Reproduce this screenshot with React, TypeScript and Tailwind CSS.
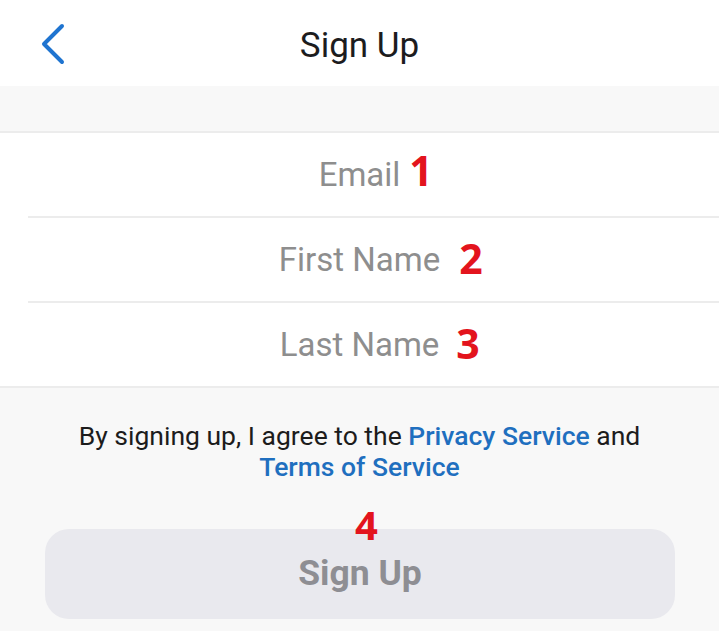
import React from "react";

const Num = ({ n, className }: { n: string; className: string }) => (
  <span
    className={
      "absolute top-1/2 -translate-y-1/2 text-[#e3141d] font-bold text-[41px] leading-none " +
      className
    }
    style={{ fontFamily: '"Open Sans", sans-serif' }}
  >
    {n}
  </span>
);

const Row = ({
  label,
  num,
  gap,
  border,
}: {
  label: string;
  num: string;
  gap: string;
  border: boolean;
}) => (
  <div className={"ml-[28px] " + (border ? "border-b-2 border-[#ececec]" : "")}>
    <div className="-ml-[28px] h-[83px] flex items-center justify-center">
      <span className="relative text-[33px] text-[#8e8e8e]">
        {label}
        <Num n={num} className={gap} />
      </span>
    </div>
  </div>
);

export default function App() {
  return (
    <div
      className="w-[719px] h-[631px] bg-[#f8f8f8] overflow-hidden flex flex-col"
      style={{ fontFamily: 'Roboto, "Noto Sans", sans-serif' }}
    >
      <header className="relative h-[86px] bg-white flex items-center justify-center shrink-0">
        <svg
          className="absolute left-[36px] top-[20px]"
          width="34"
          height="48"
          viewBox="0 0 34 48"
        >
          <path
            d="M26 6 L8 24 L26 42"
            fill="none"
            stroke="#1f74d0"
            strokeWidth="4"
            strokeLinecap="round"
            strokeLinejoin="round"
          />
        </svg>
        <h1 className="text-[35px] text-[#1c1c1e] leading-none mt-[4px]">Sign Up</h1>
      </header>
      <div className="h-[45px] shrink-0" />
      <div className="bg-white border-t-2 border-b-2 border-[#ececec]">
        <Row label="Email" num="1" gap="left-[calc(100%+9px)] mt-[-5px]" border />
        <Row label="First Name" num="2" gap="left-[calc(100%+19px)] mt-[-2px]" border />
        <Row label="Last Name" num="3" gap="left-[calc(100%+17px)] mt-[-2px]" border={false} />
      </div>
      <p className="mt-[32px] text-center text-[26.5px] leading-[31px] text-[#1c1c1c] px-[60px]">
        By signing up, I agree to the{" "}
        <span className="text-[#1f6fbf] font-medium">Privacy Service</span> and{" "}
        <span className="text-[#1f6fbf] font-medium">Terms of Service</span>
      </p>
      <div className="relative mt-[47px] ml-[45px] mr-[44px] h-[90px] rounded-[24px] bg-[#e9e9ee] flex items-center justify-center">
        <span className="text-[35.5px] font-bold text-[#8e8e93]">Sign Up</span>
        <span
          className="absolute left-[310px] -top-[24px] text-[#e3141d] font-bold text-[40px] leading-none"
          style={{ fontFamily: '"Open Sans", sans-serif' }}
        >
          4
        </span>
      </div>
    </div>
  );
}
